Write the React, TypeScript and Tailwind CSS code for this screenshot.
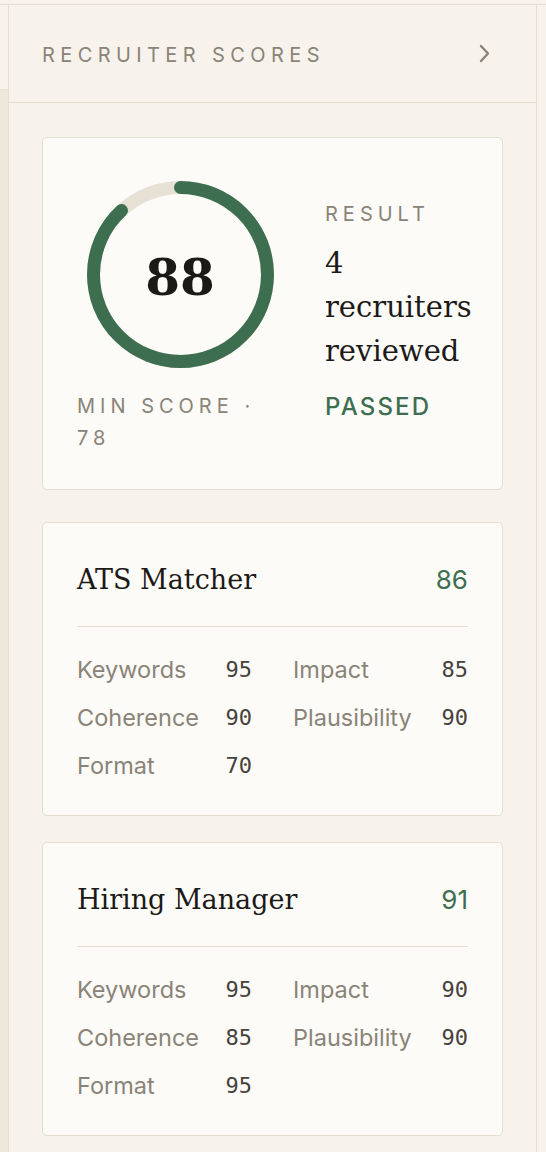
interface Metric {
  label: string;
  value: number;
}

interface Recruiter {
  name: string;
  score: number;
  metrics: Metric[];
}

const recruiters: Recruiter[] = [
  {
    name: "ATS Matcher",
    score: 86,
    metrics: [
      { label: "Keywords", value: 95 },
      { label: "Impact", value: 85 },
      { label: "Coherence", value: 90 },
      { label: "Plausibility", value: 90 },
      { label: "Format", value: 70 },
    ],
  },
  {
    name: "Hiring Manager",
    score: 91,
    metrics: [
      { label: "Keywords", value: 95 },
      { label: "Impact", value: 90 },
      { label: "Coherence", value: 85 },
      { label: "Plausibility", value: 90 },
      { label: "Format", value: 95 },
    ],
  },
];

function ScoreRing({ score }: { score: number }) {
  const size = 187;
  const stroke = 13;
  const radius = (size - stroke) / 2;
  const circumference = 2 * Math.PI * radius;
  const filled = (score / 100) * circumference;

  return (
    <div className="relative h-[187px] w-[187px]">
      <svg width={size} height={size} className="-rotate-90">
        <circle
          cx={size / 2}
          cy={size / 2}
          r={radius}
          fill="none"
          stroke="#e6e0d5"
          strokeWidth={stroke}
        />
        <circle
          cx={size / 2}
          cy={size / 2}
          r={radius}
          fill="none"
          stroke="#3e6e50"
          strokeWidth={stroke}
          strokeLinecap="round"
          strokeDasharray={`${filled} ${circumference}`}
        />
      </svg>
      <span className="absolute inset-0 flex items-center justify-center pt-[6px] font-['DejaVu_Serif',serif] text-[50px] font-bold text-[#1c1a17]">
        {score}
      </span>
    </div>
  );
}

function RecruiterCard({ recruiter }: { recruiter: Recruiter }) {
  return (
    <section className="rounded-[5px] border border-[#e4ddd1] bg-[#fcfbf8] px-[34px] pb-[25px] pt-[39px]">
      <div className="flex items-center justify-between leading-[36px]">
        <h3 className="font-['DejaVu_Serif',serif] text-[27px] text-[#1c1a17]">
          {recruiter.name}
        </h3>
        <span className="text-[26px] text-[#3e6e50]">{recruiter.score}</span>
      </div>
      <div className="mt-[28px] h-px w-full bg-[#e4ddd1]"></div>
      <div className="mt-[19px] grid grid-cols-2 gap-x-[41px]">
        {recruiter.metrics.map((metric) => (
          <div
            key={metric.label}
            className="flex items-center justify-between leading-[48px]"
          >
            <span className="text-[23.5px] text-[#8a8377]">{metric.label}</span>
            <span className="font-['DejaVu_Sans_Mono',monospace] text-[22px] text-[#46423c]">
              {metric.value}
            </span>
          </div>
        ))}
      </div>
    </section>
  );
}

export default function App() {
  return (
    <div className="min-h-[1152px] bg-[#f7f3ec] pt-[4px] font-['Inter',sans-serif]">
      <div className="flex min-h-[1148px] border-t border-[#e4ddd1]">
        <div className="flex w-[8px] flex-col">
          <div className="h-[85px] border-b border-[#e4ddd1]"></div>
          <div className="flex-1 bg-[#ede7dc]"></div>
        </div>

        <aside className="w-[529px] border-x border-[#e4ddd1]">
          <header className="flex h-[98px] items-center justify-between border-b border-[#e4ddd1] pl-[33px] pr-[46px]">
            <h2 className="pt-[2px] text-[20px] tracking-[0.27em] text-[#8a8377]">
              RECRUITER SCORES
            </h2>
            <svg width="11" height="19" viewBox="0 0 11 19" fill="none">
              <path
                d="M2 2l7 7.5L2 17"
                stroke="#8a8377"
                strokeWidth="2.4"
                strokeLinecap="round"
                strokeLinejoin="round"
              />
            </svg>
          </header>

          <div className="px-[33px] pt-[34px]">
            <section className="rounded-[5px] border border-[#e4ddd1] bg-[#fcfbf8] px-[34px] pb-[35px] pt-[43px]">
              <div className="flex items-start gap-[42px]">
                <div className="flex w-[206px] shrink-0 flex-col">
                  <div className="flex justify-center">
                    <ScoreRing score={88} />
                  </div>
                  <p className="mt-[22px] text-[20px] leading-[32px] tracking-[0.25em] text-[#8a8377]">
                    MIN SCORE · 78
                  </p>
                </div>
                <div className="mt-[19px] min-w-0 flex-1">
                  <p className="text-[20px] leading-[28px] tracking-[0.25em] text-[#8a8377]">
                    RESULT
                  </p>
                  <p className="mt-[13px] font-['DejaVu_Serif',serif] text-[29px] leading-[44px] text-[#1c1a17]">
                    4 recruiters reviewed
                  </p>
                  <p className="mt-[18px] text-[24px] font-medium leading-[32px] tracking-[0.09em] text-[#3e6e50]">
                    PASSED
                  </p>
                </div>
              </div>
            </section>

            <div className="mt-[32px] flex flex-col gap-[26px]">
              {recruiters.map((recruiter) => (
                <RecruiterCard key={recruiter.name} recruiter={recruiter} />
              ))}
            </div>
          </div>
        </aside>

        <div className="flex-1"></div>
      </div>
    </div>
  );
}
